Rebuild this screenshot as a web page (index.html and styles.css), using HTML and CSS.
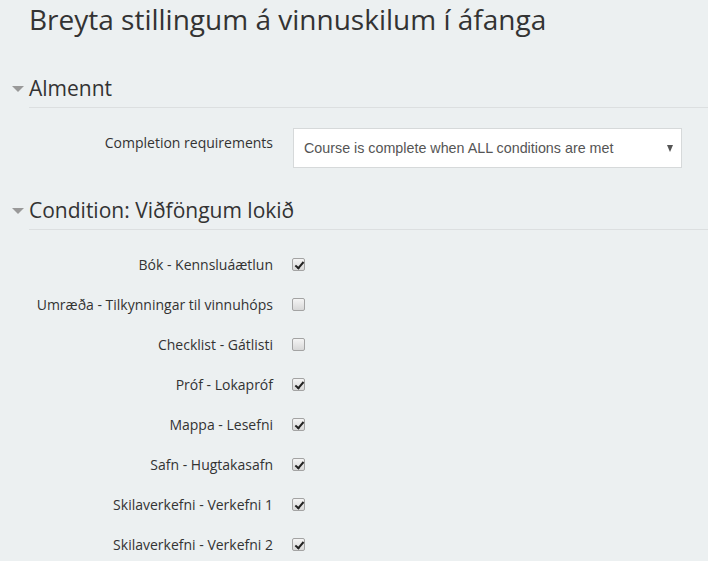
FILE: index.html
```html
<!DOCTYPE html>
<html lang="is">
<head>
<meta charset="utf-8">
<title>Breyta stillingum á vinnuskilum í áfanga</title>
<link rel="stylesheet" href="styles.css">
</head>
<body>
<div class="page">
  <h2 class="title">Breyta stillingum á vinnuskilum í áfanga</h2>

  <section class="fieldset">
    <div class="legend"><span class="caret"></span><span class="legend-text">Almennt</span></div>
    <div class="rows">
      <div class="row row-select">
        <div class="label">Completion requirements</div>
        <div class="control">
          <div class="select">
            <span>Course is complete when ALL conditions are met</span>
            <span class="arrow"></span>
          </div>
        </div>
      </div>
    </div>
  </section>

  <section class="fieldset">
    <div class="legend"><span class="caret"></span><span class="legend-text">Condition: Viðföngum lokið</span></div>
    <div class="rows checks">
      <div class="row"><div class="label">Bók - Kennsluáætlun</div><div class="control"><span class="cb checked"></span></div></div>
      <div class="row"><div class="label">Umræða - Tilkynningar til vinnuhóps</div><div class="control"><span class="cb"></span></div></div>
      <div class="row"><div class="label">Checklist - Gátlisti</div><div class="control"><span class="cb"></span></div></div>
      <div class="row"><div class="label">Próf - Lokapróf</div><div class="control"><span class="cb checked"></span></div></div>
      <div class="row"><div class="label">Mappa - Lesefni</div><div class="control"><span class="cb checked"></span></div></div>
      <div class="row"><div class="label">Safn - Hugtakasafn</div><div class="control"><span class="cb checked"></span></div></div>
      <div class="row"><div class="label">Skilaverkefni - Verkefni 1</div><div class="control"><span class="cb checked"></span></div></div>
      <div class="row"><div class="label">Skilaverkefni - Verkefni 2</div><div class="control"><span class="cb checked"></span></div></div>
    </div>
  </section>
</div>
</body>
</html>
```

FILE: styles.css
```css
html, body {
  margin: 0;
  padding: 0;
  background: #ecf0f1;
  height: 100%;
  overflow: hidden;
}

body {
  font-family: "Open Sans", "Liberation Sans", sans-serif;
  color: #333;
}

.page {
  padding-left: 12px;
}

.title {
  margin: 0 0 0 17px;
  padding-top: 1px;
  font-size: 28px;
  font-weight: 400;
  line-height: 36px;
  color: #333;
}

.fieldset {
  margin: 0;
}

.legend {
  display: flex;
  align-items: center;
  height: 30px;
}

.fieldset:first-of-type .legend {
  margin-top: 36px;
}

.caret {
  width: 0;
  height: 0;
  border-left: 6px solid transparent;
  border-right: 6px solid transparent;
  border-top: 6px solid #999;
  margin-right: 5px;
  margin-top: 2px;
}

.legend-text {
  font-size: 21px;
  line-height: 30px;
  color: #333;
}

.rows {
  margin-left: 17px;
  border-top: 1px solid #dcdfe0;
  margin-top: 4px;
}

.row {
  display: grid;
  grid-template-columns: 244px 1fr;
  column-gap: 20px;
  align-items: center;
  height: 40px;
}

.label {
  text-align: right;
  font-size: 14px;
  color: #333;
}

.row-select {
  margin-top: 20px;
  height: 40px;
  margin-bottom: 27px;
}

.row-select .label {
  align-self: start;
  padding-top: 5px;
}

.select {
  box-sizing: border-box;
  width: 389px;
  height: 40px;
  background: #fff;
  border: 1px solid #d6d9da;
  display: flex;
  align-items: center;
  justify-content: space-between;
  padding: 0 8px 0 10px;
  font-family: "Liberation Sans", Arial, sans-serif;
  font-size: 14.3px;
  color: #555;
}

.arrow {
  width: 0;
  height: 0;
  border-left: 3.5px solid transparent;
  border-right: 3.5px solid transparent;
  border-top: 7px solid #555;
  margin-top: 1px;
}

.checks {
  padding-top: 14px;
}

.cb {
  display: block;
  box-sizing: border-box;
  width: 13px;
  height: 13px;
  border: 1px solid #a3a3a3;
  border-radius: 2px;
  background: linear-gradient(#f4f4f4, #d8d8d8);
  position: relative;
  margin-left: -1px;
}

.cb.checked::after {
  content: "";
  position: absolute;
  left: 4px;
  top: 1px;
  width: 3px;
  height: 7px;
  border: solid #222;
  border-width: 0 2px 2px 0;
  transform: rotate(40deg);
}
```
